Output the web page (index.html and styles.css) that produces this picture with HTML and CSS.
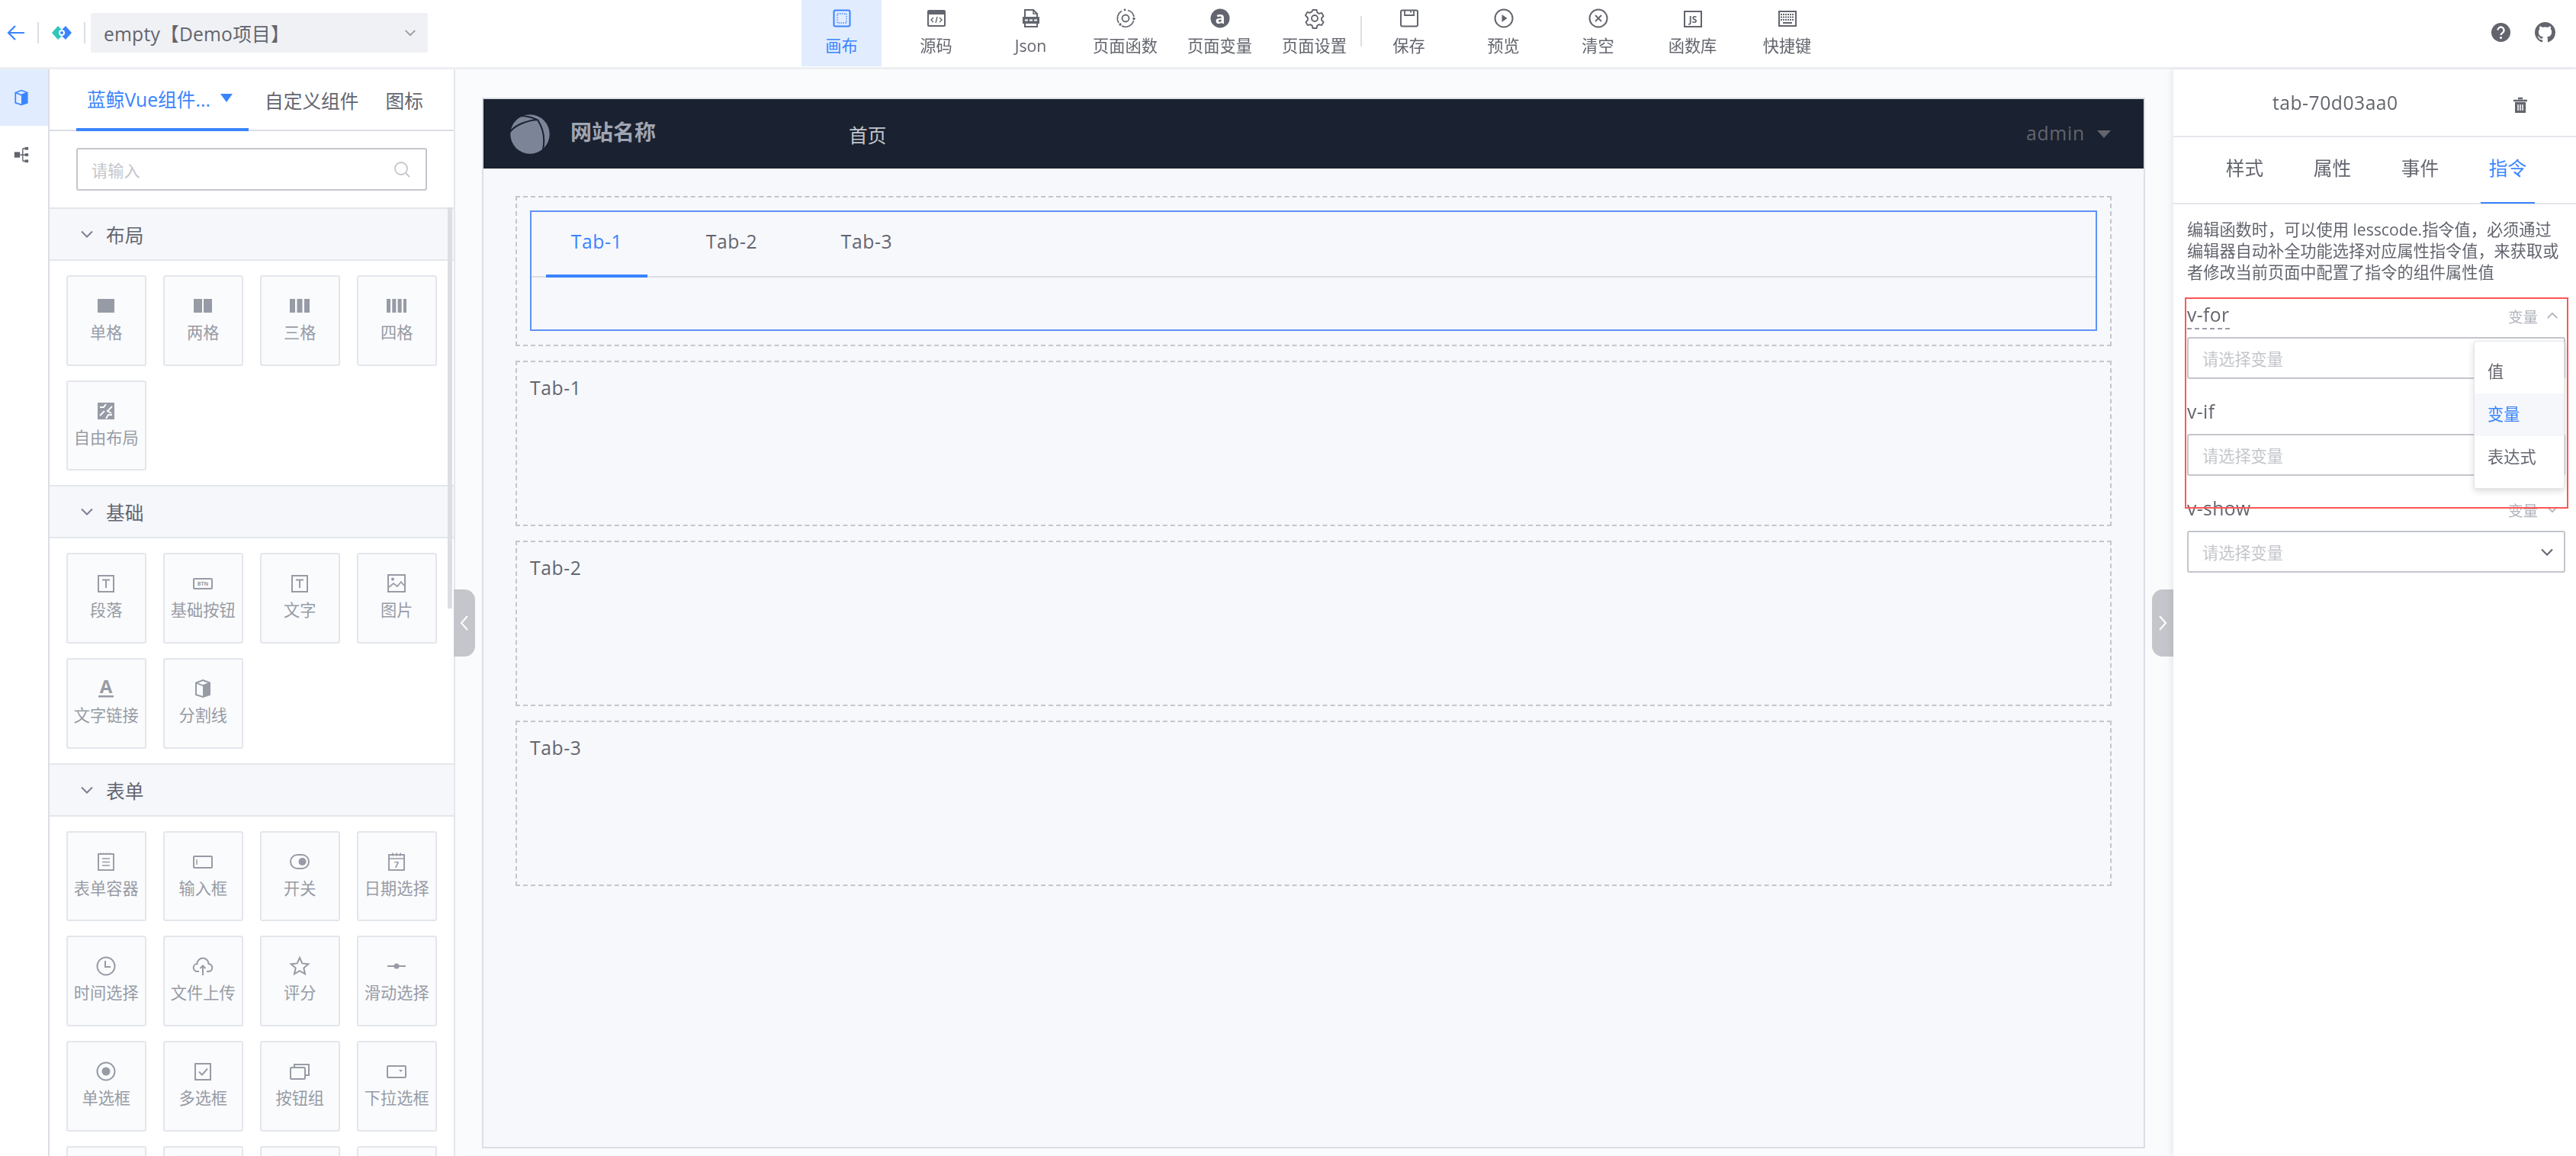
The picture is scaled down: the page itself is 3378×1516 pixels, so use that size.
FILE: index.html
```html
<!DOCTYPE html>
<html lang="zh">
<head>
<meta charset="utf-8">
<title>empty【Demo项目】</title>
<link rel="stylesheet" href="styles.css">
</head>
<body>
<svg class="defs" width="0" height="0">
  <defs>
    <symbol id="t-canvas" viewBox="0 0 28 28"><rect x="3.500" y="3.500" width="21" height="21" rx="2" fill="none" stroke="currentColor" stroke-width="2"/><rect x="8" y="8" width="12" height="12" fill="none" stroke="currentColor" stroke-width="1.300" stroke-dasharray="1.500 1.500"/></symbol>
    <symbol id="t-code" viewBox="0 0 28 28"><rect x="3" y="4" width="22" height="20" rx="1" fill="none" stroke="currentColor" stroke-width="2"/><rect x="3" y="4" width="22" height="5" fill="currentColor"/><path d="M10 13l-3 3 3 3M18 13l3 3-3 3M15 12l-2 8" fill="none" stroke="currentColor" stroke-width="1.400"/></symbol>
    <symbol id="t-json" viewBox="0 0 28 28"><path d="M6 25V3h11l5 5v17z" fill="none" stroke="currentColor" stroke-width="2"/><path d="M17 3v5h5" fill="none" stroke="currentColor" stroke-width="1.500"/><rect x="3" y="12" width="22" height="9" fill="currentColor"/><path d="M6 16.500h4M12 16.500h4M18 16.500h4" stroke="#fff" stroke-width="1.800"/></symbol>
    <symbol id="t-func" viewBox="0 0 28 28"><path d="M9 4.500A11 11 0 0 0 5 20M17 3.500A11 11 0 0 1 25 12M24.500 17A11 11 0 0 1 9 24" fill="none" stroke="currentColor" stroke-width="1.600"/><circle cx="14" cy="14" r="4.500" fill="none" stroke="currentColor" stroke-width="1.800"/><circle cx="25" cy="14.500" r="1.700" fill="currentColor"/><circle cx="7" cy="22" r="1.700" fill="currentColor"/><circle cx="13" cy="3" r="1.400" fill="currentColor"/></symbol>
    <symbol id="t-var" viewBox="0 0 28 28"><circle cx="14" cy="14" r="12.500" fill="currentColor"/><text x="14" y="20.500" text-anchor="middle" class="svg-a" fill="#fff">a</text></symbol>
    <symbol id="t-gear" viewBox="0 0 28 28"><path d="M11.500 3h5l.8 3.400 2.600 1.500 3.300-1 2.400 4.200-2.500 2.400v3l2.500 2.400-2.400 4.200-3.300-1-2.600 1.500-.8 3.400h-5l-.8-3.400-2.600-1.500-3.300 1-2.400-4.200 2.500-2.400v-3L1.900 10.100l2.400-4.200 3.300 1 2.600-1.500z" fill="none" stroke="currentColor" stroke-width="1.900" stroke-linejoin="round"/><circle cx="14" cy="14" r="4" fill="none" stroke="currentColor" stroke-width="1.900"/></symbol>
    <symbol id="t-save" viewBox="0 0 28 28"><rect x="3" y="3.500" width="22" height="21" rx="2" fill="none" stroke="currentColor" stroke-width="2"/><path d="M8 4v6h12V4M15 5.500h2" fill="none" stroke="currentColor" stroke-width="1.800"/></symbol>
    <symbol id="t-play" viewBox="0 0 28 28"><circle cx="14" cy="14" r="11.500" fill="none" stroke="currentColor" stroke-width="2"/><path d="M11.500 9l7 5-7 5z" fill="currentColor"/></symbol>
    <symbol id="t-clear" viewBox="0 0 28 28"><circle cx="14" cy="14" r="11.500" fill="none" stroke="currentColor" stroke-width="2"/><path d="M10 10l8 8M18 10l-8 8" stroke="currentColor" stroke-width="1.800"/></symbol>
    <symbol id="t-js" viewBox="0 0 28 28"><rect x="3" y="5" width="22" height="20" fill="none" stroke="currentColor" stroke-width="2"/><text x="14" y="19.500" text-anchor="middle" class="svg-js" fill="currentColor">JS</text></symbol>
    <symbol id="t-key" viewBox="0 0 28 28"><rect x="3" y="5" width="22" height="19" fill="none" stroke="currentColor" stroke-width="2"/><path d="M5 9h18M5 12.500h18M5 16h18" stroke="currentColor" stroke-width="1.800" stroke-dasharray="2 1"/><path d="M8 20h12" stroke="currentColor" stroke-width="2"/></symbol>
    <symbol id="c-g1" viewBox="0 0 28 28"><rect x="3" y="5" width="22" height="18" fill="currentColor"/></symbol>
    <symbol id="c-g2" viewBox="0 0 28 28"><rect x="2" y="5" width="11" height="18" fill="currentColor"/><rect x="15" y="5" width="11" height="18" fill="currentColor"/></symbol>
    <symbol id="c-g3" viewBox="0 0 28 28"><path d="M1 5h7v18H1zM10.500 5h7v18h-7zM20 5h7v18h-7z" fill="currentColor"/></symbol>
    <symbol id="c-g4" viewBox="0 0 28 28"><path d="M1 5h5v18H1zM8.300 5h5v18h-5zM15.600 5h5v18h-5zM23 5h4v18h-4z" fill="currentColor"/></symbol>
    <symbol id="c-free" viewBox="0 0 28 28"><rect x="3" y="3" width="22" height="22" fill="currentColor"/><path d="M6 9h5l3-4M22 8l-6 6 5 3M6 20l6-6M14 24l3-5h5" fill="none" stroke="#fafbfd" stroke-width="2"/></symbol>
    <symbol id="c-para" viewBox="0 0 28 28"><rect x="4" y="4" width="20" height="21" fill="none" stroke="currentColor" stroke-width="2"/><path d="M9 9.500h10M14 9.500V20" stroke="currentColor" stroke-width="2"/></symbol>
    <symbol id="c-btn" viewBox="0 0 28 28"><rect x="2" y="8" width="24" height="13" rx="1" fill="none" stroke="currentColor" stroke-width="2"/><text x="14" y="17" text-anchor="middle" class="svg-btn" fill="currentColor">BTN</text></symbol>
    <symbol id="c-img" viewBox="0 0 28 28"><rect x="3" y="3" width="22" height="22" fill="none" stroke="currentColor" stroke-width="2"/><circle cx="9" cy="8.500" r="2" fill="currentColor"/><path d="M4 19l6-5 5 4 5-6 4 5" fill="none" stroke="currentColor" stroke-width="1.700"/></symbol>
    <symbol id="c-link" viewBox="0 0 28 28"><text x="14" y="20" text-anchor="middle" class="svg-link" fill="currentColor">A</text><rect x="4" y="23" width="20" height="2.500" fill="currentColor"/></symbol>
    <symbol id="c-cube" viewBox="0 0 28 28"><path d="M14 3l9 3.500v15.500l-9 3-9-3V6.500z" fill="none" stroke="currentColor" stroke-width="2"/><path d="M5 6.500l9 3.500 9-3.500" fill="none" stroke="currentColor" stroke-width="1.800"/><path d="M14 10l9-3.500v15.500l-9 3z" fill="currentColor"/></symbol>
    <symbol id="c-form" viewBox="0 0 28 28"><rect x="4" y="4" width="20" height="21" fill="none" stroke="currentColor" stroke-width="1.900"/><path d="M9 10h10M9 14.500h10M9 19h10M7 2.500v2M11 2.500v2M15 2.500v2M19 2.500v2" stroke="currentColor" stroke-width="1.700"/></symbol>
    <symbol id="c-input" viewBox="0 0 28 28"><rect x="2" y="7" width="24" height="15" rx="1" fill="none" stroke="currentColor" stroke-width="2"/><path d="M6 11v7" stroke="currentColor" stroke-width="1.500"/></symbol>
    <symbol id="c-switch" viewBox="0 0 28 28"><rect x="2" y="5" width="24" height="18" rx="9" fill="none" stroke="currentColor" stroke-width="2"/><circle cx="17.500" cy="14" r="5" fill="currentColor"/></symbol>
    <symbol id="c-date" viewBox="0 0 28 28"><rect x="4" y="5" width="20" height="20" fill="none" stroke="currentColor" stroke-width="1.900"/><path d="M4 10h20M9 2.500v4M14 2.500v4M19 2.500v4" stroke="currentColor" stroke-width="1.700"/><text x="14" y="22" text-anchor="middle" class="svg-seven" fill="currentColor">7</text></symbol>
    <symbol id="c-time" viewBox="0 0 28 28"><circle cx="14" cy="14" r="11.500" fill="none" stroke="currentColor" stroke-width="2"/><path d="M13 7v8h7" fill="none" stroke="currentColor" stroke-width="2"/></symbol>
    <symbol id="c-upload" viewBox="0 0 28 28"><path d="M9 21H7a5 5 0 0 1-.5-10 7.500 7.500 0 0 1 15 0A5 5 0 0 1 21 21h-2" fill="none" stroke="currentColor" stroke-width="2"/><path d="M14 26V14M10.500 17l3.500-3.500 3.500 3.500" fill="none" stroke="currentColor" stroke-width="2"/></symbol>
    <symbol id="c-star" viewBox="0 0 28 28"><path d="M14 3l3.300 7.400 8 .8-6 5.300 1.800 7.800-7.100-4.100-7.100 4.100 1.800-7.800-6-5.300 8-.8z" fill="none" stroke="currentColor" stroke-width="2"/></symbol>
    <symbol id="c-slider" viewBox="0 0 28 28"><path d="M2 14h24" stroke="currentColor" stroke-width="2"/><circle cx="14" cy="14" r="3.500" fill="currentColor"/></symbol>
    <symbol id="c-radio" viewBox="0 0 28 28"><circle cx="14" cy="14" r="11.500" fill="none" stroke="currentColor" stroke-width="2"/><circle cx="14" cy="14" r="5.500" fill="currentColor"/></symbol>
    <symbol id="c-check" viewBox="0 0 28 28"><rect x="4" y="4" width="20" height="21" fill="none" stroke="currentColor" stroke-width="2"/><path d="M9 14.500l4 4 7-8" fill="none" stroke="currentColor" stroke-width="1.900"/></symbol>
    <symbol id="c-group" viewBox="0 0 28 28"><rect x="2" y="9" width="19" height="15" rx="1" fill="none" stroke="currentColor" stroke-width="2"/><path d="M7 9V5h19v14h-5" fill="none" stroke="currentColor" stroke-width="2"/></symbol>
    <symbol id="c-select" viewBox="0 0 28 28"><rect x="2" y="7" width="24" height="15" rx="1" fill="none" stroke="currentColor" stroke-width="2"/><path d="M17 12h5l-2.500 3z" fill="currentColor"/></symbol>
    <symbol id="i-down" viewBox="0 0 20 20"><path d="M3 6.500l7 7 7-7" fill="none" stroke="currentColor" stroke-width="2"/></symbol>
    <symbol id="i-up" viewBox="0 0 20 20"><path d="M3 13.500l7-7 7 7" fill="none" stroke="currentColor" stroke-width="2"/></symbol>
  </defs>
</svg>

<div class="app">
  <header class="topbar">
    <svg class="back" width="24" height="24" viewBox="0 0 24 24"><path d="M23 12H2M11 3l-9 9 9 9" fill="none" stroke="currentColor" stroke-width="2.200"/></svg>
    <i class="vline"></i>
    <svg class="brand" width="26" height="18" viewBox="0 0 26 18"><path d="M8 0l5 5-4 4 4 4-5 5-8-9z" fill="#2fc6c0"/><path d="M18 0l8 9-8 9-5-5 4-4-4-4z" fill="#3a84ff"/><circle cx="13" cy="9" r="4" fill="#fff"/><circle cx="13" cy="9" r="2" fill="#3a84ff"/></svg>
    <i class="vline"></i>
    <div class="project">
      <span>empty【Demo项目】</span>
      <svg class="chev" width="18" height="18"><use href="#i-down"/></svg>
    </div>
    <nav class="tools">
      <a class="tool active"><svg width="28" height="28"><use href="#t-canvas"/></svg><span>画布</span></a>
      <a class="tool"><svg width="28" height="28"><use href="#t-code"/></svg><span>源码</span></a>
      <a class="tool"><svg width="28" height="28"><use href="#t-json"/></svg><span>Json</span></a>
      <a class="tool"><svg width="28" height="28"><use href="#t-func"/></svg><span>页面函数</span></a>
      <a class="tool"><svg width="28" height="28"><use href="#t-var"/></svg><span>页面变量</span></a>
      <a class="tool sep"><svg width="28" height="28"><use href="#t-gear"/></svg><span>页面设置</span></a>
      <a class="tool"><svg width="28" height="28"><use href="#t-save"/></svg><span>保存</span></a>
      <a class="tool"><svg width="28" height="28"><use href="#t-play"/></svg><span>预览</span></a>
      <a class="tool"><svg width="28" height="28"><use href="#t-clear"/></svg><span>清空</span></a>
      <a class="tool"><svg width="28" height="28"><use href="#t-js"/></svg><span>函数库</span></a>
      <a class="tool"><svg width="28" height="28"><use href="#t-key"/></svg><span>快捷键</span></a>
    </nav>
    <div class="top-right">
      <svg width="27" height="27" viewBox="0 0 28 28"><circle cx="14" cy="14" r="13" fill="#63656e"/><path d="M9.800 11a4.200 4.200 0 1 1 6.600 3.400c-1.500 1-2.400 1.700-2.400 3.300" fill="none" stroke="#fff" stroke-width="2.400"/><circle cx="14" cy="21.300" r="1.600" fill="#fff"/></svg>
      <svg width="27" height="27" viewBox="0 0 16 16"><path fill="#63656e" d="M8 0C3.580 0 0 3.580 0 8c0 3.540 2.290 6.530 5.470 7.590.4.070.55-.17.55-.38 0-.19-.01-.82-.01-1.490-2.010.37-2.530-.49-2.690-.94-.09-.23-.48-.94-.82-1.130-.28-.15-.68-.52-.01-.53.63-.01 1.080.58 1.230.82.72 1.210 1.870.87 2.330.66.07-.52.28-.87.51-1.070-1.780-.2-3.640-.89-3.640-3.950 0-.87.31-1.590.82-2.150-.08-.2-.36-1.020.08-2.120 0 0 .67-.21 2.200.82.640-.18 1.320-.27 2-.27s1.360.09 2 .27c1.530-1.040 2.200-.82 2.200-.82.44 1.100.16 1.920.08 2.120.51.560.82 1.270.82 2.150 0 3.070-1.870 3.750-3.650 3.950.29.250.54.730.54 1.480 0 1.070-.01 1.930-.01 2.200 0 .21.150.46.550.38A8.010 8.010 0 0 0 16 8c0-4.420-3.580-8-8-8z"/></svg>
    </div>
  </header>

  <main class="body">
    <aside class="rail">
      <div class="rail-item on"><svg width="24" height="24"><use href="#c-cube"/></svg></div>
      <div class="rail-item"><svg width="22" height="24" viewBox="0 0 24 26"><rect x="2" y="9" width="8" height="8" fill="currentColor"/><path d="M10 13h9M14 4h5M14 22h5M14 4v18" fill="none" stroke="currentColor" stroke-width="1.500"/><rect x="17" y="2" width="5" height="4" fill="currentColor"/><rect x="17" y="11" width="5" height="4" fill="currentColor"/><rect x="17" y="20" width="5" height="4" fill="currentColor"/></svg></div>
    </aside>

    <aside class="palette">
      <div class="pal-tabs">
        <div class="pal-tab on"><span>蓝鲸Vue组件...</span><i class="tri"></i></div>
        <div class="pal-tab">自定义组件</div>
        <div class="pal-tab">图标</div>
      </div>
      <div class="pal-search">
        <div class="search">
          <span>请输入</span>
          <svg width="24" height="24" viewBox="0 0 24 24"><circle cx="11" cy="11" r="8" fill="none" stroke="currentColor" stroke-width="1.800"/><path d="M17 17l5 5" stroke="currentColor" stroke-width="1.800"/></svg>
        </div>
      </div>
      <div class="pal-list">
        <section>
          <h3 class="group"><svg width="20" height="20"><use href="#i-down"/></svg>布局</h3>
          <div class="grid">
            <div class="card"><svg width="28" height="28"><use href="#c-g1"/></svg><span>单格</span></div>
            <div class="card"><svg width="28" height="28"><use href="#c-g2"/></svg><span>两格</span></div>
            <div class="card"><svg width="28" height="28"><use href="#c-g3"/></svg><span>三格</span></div>
            <div class="card"><svg width="28" height="28"><use href="#c-g4"/></svg><span>四格</span></div>
            <div class="card"><svg width="28" height="28"><use href="#c-free"/></svg><span>自由布局</span></div>
          </div>
        </section>
        <section>
          <h3 class="group"><svg width="20" height="20"><use href="#i-down"/></svg>基础</h3>
          <div class="grid">
            <div class="card"><svg width="28" height="28"><use href="#c-para"/></svg><span>段落</span></div>
            <div class="card"><svg width="28" height="28"><use href="#c-btn"/></svg><span>基础按钮</span></div>
            <div class="card"><svg width="28" height="28"><use href="#c-para"/></svg><span>文字</span></div>
            <div class="card"><svg width="28" height="28"><use href="#c-img"/></svg><span>图片</span></div>
            <div class="card"><svg width="28" height="28"><use href="#c-link"/></svg><span>文字链接</span></div>
            <div class="card"><svg width="28" height="28"><use href="#c-cube"/></svg><span>分割线</span></div>
          </div>
        </section>
        <section>
          <h3 class="group"><svg width="20" height="20"><use href="#i-down"/></svg>表单</h3>
          <div class="grid">
            <div class="card"><svg width="28" height="28"><use href="#c-form"/></svg><span>表单容器</span></div>
            <div class="card"><svg width="28" height="28"><use href="#c-input"/></svg><span>输入框</span></div>
            <div class="card"><svg width="28" height="28"><use href="#c-switch"/></svg><span>开关</span></div>
            <div class="card"><svg width="28" height="28"><use href="#c-date"/></svg><span>日期选择</span></div>
            <div class="card"><svg width="28" height="28"><use href="#c-time"/></svg><span>时间选择</span></div>
            <div class="card"><svg width="28" height="28"><use href="#c-upload"/></svg><span>文件上传</span></div>
            <div class="card"><svg width="28" height="28"><use href="#c-star"/></svg><span>评分</span></div>
            <div class="card"><svg width="28" height="28"><use href="#c-slider"/></svg><span>滑动选择</span></div>
            <div class="card"><svg width="28" height="28"><use href="#c-radio"/></svg><span>单选框</span></div>
            <div class="card"><svg width="28" height="28"><use href="#c-check"/></svg><span>多选框</span></div>
            <div class="card"><svg width="28" height="28"><use href="#c-group"/></svg><span>按钮组</span></div>
            <div class="card"><svg width="28" height="28"><use href="#c-select"/></svg><span>下拉选框</span></div>
            <div class="card"></div>
            <div class="card"></div>
            <div class="card"></div>
            <div class="card"></div>
          </div>
        </section>
      </div>
      <i class="scrollthumb"></i>
    </aside>

    <section class="stage">
      <div class="handle handle-l"><svg width="12" height="24" viewBox="0 0 12 24"><path d="M10 3L2 12l8 9" fill="none" stroke="currentColor" stroke-width="2"/></svg></div>
      <div class="handle handle-r"><svg width="12" height="24" viewBox="0 0 12 24"><path d="M2 3l8 9-8 9" fill="none" stroke="currentColor" stroke-width="2"/></svg></div>
      <div class="canvas">
        <div class="site-nav">
          <svg class="site-logo" width="52" height="52" viewBox="0 0 52 52"><circle cx="26" cy="26" r="25.700" fill="#7c8497"/><path d="M0 23C6 14 22 8 36 7M36 7c7 11 10 25 7 39M13 2c9 0 17 2 24 6" fill="none" stroke="#1a2130" stroke-width="2"/></svg>
          <strong class="site-name">网站名称</strong>
          <span class="site-link">首页</span>
          <span class="site-user">admin</span>
          <i class="site-tri"></i>
        </div>
        <div class="canvas-body">
          <div class="slot slot-tabs">
            <div class="tabs-comp">
              <div class="tabs-head">
                <span class="tab on">Tab-1</span>
                <span class="tab">Tab-2</span>
                <span class="tab">Tab-3</span>
              </div>
            </div>
          </div>
          <div class="slot">Tab-1</div>
          <div class="slot">Tab-2</div>
          <div class="slot">Tab-3</div>
        </div>
      </div>
    </section>

    <aside class="props">
      <div class="props-title">
        <span>tab-70d03aa0</span>
        <svg class="trash" width="22" height="24" viewBox="0 0 22 24"><path d="M2 6h18M8 3h6" stroke="currentColor" stroke-width="2.400"/><path d="M4 8h14v14H4z" fill="currentColor"/><path d="M8 11v8M11 11v8M14 11v8" stroke="#fff" stroke-width="1.500"/></svg>
      </div>
      <div class="props-tabs">
        <div class="ptab"><span>样式</span></div>
        <div class="ptab"><span>属性</span></div>
        <div class="ptab"><span>事件</span></div>
        <div class="ptab on"><span>指令</span></div>
      </div>
      <div class="props-body">
        <p class="tip">编辑函数时，可以使用 lesscode.指令值，必须通过编辑器自动补全功能选择对应属性指令值，来获取或者修改当前页面中配置了指令的组件属性值</p>
        <div class="field">
          <div class="field-head"><label class="dash">v-for</label><span class="kind">变量<svg width="18" height="18"><use href="#i-up"/></svg></span></div>
          <div class="picker"><span>请选择变量</span></div>
        </div>
        <div class="field">
          <div class="field-head"><label>v-if</label></div>
          <div class="picker"><span>请选择变量</span></div>
        </div>
        <div class="field">
          <div class="field-head"><label>v-show</label><span class="kind">变量<svg width="18" height="18"><use href="#i-down"/></svg></span></div>
          <div class="picker"><span>请选择变量</span><svg class="pick-chev" width="20" height="20"><use href="#i-down"/></svg></div>
        </div>
        <ul class="menu">
          <li>值</li>
          <li class="on">变量</li>
          <li>表达式</li>
        </ul>
        <div class="annot"></div>
      </div>
    </aside>
  </main>
</div>
</body>
</html>
```

FILE: styles.css
```css
* { box-sizing: border-box; }
html, body { margin: 0; padding: 0; height: 100%; }
body {
  width: 3378px;
  height: 1516px;
  overflow: hidden;
  background: #fff;
  color: #63656e;
  font-family: "Open Sans", "Noto Sans CJK SC", sans-serif;
  font-size: 21.2px;
}
.defs { position: absolute; }
.svg-a { font: 700 21px "Open Sans", sans-serif; }
.svg-js { font: 700 12px "Open Sans", sans-serif; }
.svg-btn { font: 700 7px "Open Sans", sans-serif; }
.svg-link { font: 700 24px "Open Sans", sans-serif; }
.svg-seven { font: 700 11px "Open Sans", sans-serif; }

.app {
  display: flex;
  flex-direction: column;
  height: 1516px;
  filter: blur(0.5px);
}

/* top bar */
.topbar {
  flex: none;
  display: flex;
  align-items: center;
  height: 91px;
  padding: 0 0 3px 9px;
  background: #fff;
  border-bottom: 3px solid #eceef2;
}
.back { color: #3a84ff; flex: none; }
.vline { flex: none; width: 2px; height: 28px; margin: 0 17px 0 16px; background: #dcdee5; }
.brand { flex: none; }
.vline + .project { margin-left: -10px; }
.project {
  flex: none;
  display: flex;
  align-items: center;
  justify-content: space-between;
  width: 442px;
  height: 52px;
  padding: 0 14px 0 17px;
  border-radius: 3px;
  background: #f0f1f5;
  font-size: 24.7px;
  letter-spacing: 0.2px;
}
.chev { color: #979ba5; }
.tools {
  flex: none;
  display: flex;
  gap: 19px;
  margin-left: 490px;
  height: 88px;
}
.tool {
  position: relative;
  flex: none;
  width: 105px;
  height: 88px;
  display: flex;
  flex-direction: column;
  align-items: center;
  padding-top: 11px;
  color: #63656e;
  white-space: nowrap;
}
.tool span { margin-top: 7px; font-size: 21.2px; line-height: 30px; }
.tool.active { background: #e1ecff; color: #3a84ff; }
.tool.sep::after {
  content: "";
  position: absolute;
  right: -10px;
  top: 22px;
  width: 2px;
  height: 40px;
  background: #dcdee5;
}
.top-right {
  margin-left: auto;
  display: flex;
  gap: 31px;
  padding-right: 27px;
}

/* main */
.body { flex: 1; display: flex; min-height: 0; }

.rail {
  flex: none;
  width: 65px;
  border-right: 2px solid #dcdee5;
}
.rail-item {
  height: 74px;
  display: flex;
  align-items: center;
  justify-content: center;
  padding-right: 8px;
  color: #63656e;
}
.rail-item.on { background: #e1ecff; color: #3a84ff; }
.rail-item + .rail-item { height: 76px; }

/* palette */
.palette {
  position: relative;
  flex: none;
  width: 532px;
  display: flex;
  flex-direction: column;
  overflow: hidden;
  background: #fff;
  border-right: 2px solid #e4e6ec;
}
.pal-tabs {
  flex: none;
  display: flex;
  height: 81px;
  padding-left: 35px;
  border-bottom: 2px solid #dcdee5;
  font-size: 24.7px;
}
.pal-tab {
  display: flex;
  align-items: center;
  height: 81px;
  padding-bottom: 2px;
  margin-right: 35px;
  white-space: nowrap;
}
.pal-tab.on {
  width: 226px;
  margin-right: 21px;
  padding-left: 14px;
  color: #3a84ff;
  border-bottom: 4px solid #3a84ff;
}
.tri {
  margin-left: 13px;
  border: 8px solid transparent;
  border-top: 11px solid #3a84ff;
  border-bottom: 0;
}
.pal-search { flex: none; padding: 22px 0 22px 35px; }
.search {
  width: 460px;
  height: 56px;
  display: flex;
  align-items: center;
  justify-content: space-between;
  padding: 0 19px 0 18px;
  border: 2px solid #c4c6cc;
  border-radius: 3px;
  color: #c4c6cc;
}
.pal-list { flex: 1; min-height: 0; overflow: hidden; }
.group {
  display: flex;
  align-items: center;
  gap: 15px;
  height: 70px;
  margin: 0;
  padding-left: 39px;
  background: #f5f7fb;
  border-top: 2px solid #e4e6ec;
  border-bottom: 2px solid #e4e6ec;
  font-size: 24.7px;
  font-weight: 400;
}
.group svg { color: #7c8090; }
.grid {
  display: grid;
  grid-template-columns: repeat(4, 104.5px);
  grid-auto-rows: 118.67px;
  gap: 19px 22.5px;
  padding: 19px 0 19px 22px;
}
.card {
  display: flex;
  flex-direction: column;
  align-items: center;
  padding-top: 24px;
  background: #fafbfd;
  border: 2px solid #e4e6ec;
  border-radius: 3px;
  color: #979ba5;
  white-space: nowrap;
}
.card span { margin-top: 7px; line-height: 28px; }
.scrollthumb {
  position: absolute;
  right: 2px;
  top: 181px;
  width: 6px;
  height: 526px;
  background: #dcdee5;
}

/* stage */
.stage {
  position: relative;
  flex: 1;
  min-width: 0;
  padding: 37px 37px 10px 35px;
  background: #fafbfd;
}
.handle {
  position: absolute;
  top: 682px;
  width: 28px;
  height: 88px;
  display: flex;
  align-items: center;
  justify-content: center;
  background: #c4c6cc;
  color: #fff;
}
.handle-l { left: -2px; border-radius: 0 14px 14px 0; }
.handle-r { right: 0; border-radius: 14px 0 0 14px; }
.canvas {
  height: 100%;
  background: #f7f8fc;
  border: 2px solid #dcdee5;
}
.site-nav {
  display: flex;
  align-items: center;
  height: 91px;
  padding-left: 35px;
  background: #1a2130;
}
.site-logo { flex: none; }
.site-name {
  margin: -8px 0 0 27px;
  width: 365px;
  font-size: 28px;
  font-weight: 700;
  color: #a0a5b2;
}
.site-link { font-size: 24.7px; color: #c4c6cc; }
.site-user { margin: -2px 0 0 auto; font-size: 24.7px; letter-spacing: 0.8px; color: #63656e; }
.site-tri {
  margin: 0 43px 0 16px;
  border: 9px solid transparent;
  border-top: 10px solid #63656e;
  border-bottom: 0;
}
.canvas-body {
  display: flex;
  flex-direction: column;
  gap: 19px;
  padding: 36px 42px 0;
}
.slot {
  height: 217px;
  padding: 16px 17px;
  border: 2px dashed #c4c6cc;
  font-size: 24.7px;
  line-height: 36px;
  letter-spacing: 0.6px;
}
.slot-tabs { height: 197px; padding-top: 17px; }
.tabs-comp {
  height: 158px;
  border: 2px solid #5f92f5;
}
.tabs-head {
  display: flex;
  gap: 44px;
  height: 86px;
  padding-left: 19px;
  border-bottom: 2px solid #dcdee5;
}
.tab {
  width: 133px;
  height: 86px;
  text-align: center;
  line-height: 78px;
}
.tab.on { color: #3a84ff; border-bottom: 4px solid #3a84ff; }

/* properties */
.props {
  flex: none;
  width: 528px;
  display: flex;
  flex-direction: column;
  background: #fff;
  box-shadow: -4px 0 6px rgba(0, 0, 0, 0.06);
  z-index: 1;
}
.props-title {
  position: relative;
  flex: none;
  height: 89px;
  display: flex;
  align-items: center;
  padding: 0 0 0 130px;
  border-bottom: 2px solid #e4e6ec;
  font-size: 24.7px;
  letter-spacing: 0.5px;
}
.trash { position: absolute; right: 62px; top: 35px; color: #63656e; }
.props-tabs {
  flex: none;
  display: flex;
  justify-content: center;
  height: 88px;
  padding-left: 4px;
  border-bottom: 2px solid #e4e6ec;
  font-size: 24.7px;
}
.ptab { width: 115px; height: 86px; display: flex; justify-content: center; }
.ptab span { padding: 0 11px; line-height: 82px; height: 87px; }
.ptab.on span { color: #3a84ff; border-bottom: 2px solid #3a84ff; }
.props-body { position: relative; flex: 1; padding: 19px 0 0 18px; }
.tip { width: 490px; margin: 0 0 15px; line-height: 28px; }
.field { width: 496px; margin-bottom: 16px; }
.field-head {
  display: flex;
  align-items: center;
  justify-content: space-between;
  height: 56px;
}
.field-head label {
  font-size: 24.7px;
  line-height: 34px;
  letter-spacing: 0.4px;
  border-bottom: 2px dashed transparent;
}
.field-head label.dash { border-bottom-color: #979ba5; }
.kind {
  display: flex;
  align-items: center;
  gap: 10px;
  padding-right: 8px;
  font-size: 19.5px;
  color: #b0b3bb;
}
.picker {
  position: relative;
  height: 55px;
  display: flex;
  align-items: center;
  justify-content: space-between;
  padding: 0 12px 0 18px;
  border: 2px solid #c4c6cc;
  border-radius: 3px;
  color: #c4c6cc;
}
.pick-chev { color: #63656e; }
.menu {
  position: absolute;
  left: 394px;
  top: 179px;
  width: 119px;
  margin: 0;
  padding: 12px 0;
  list-style: none;
  background: #fff;
  border: 1px solid #e4e6ec;
  border-radius: 3px;
  box-shadow: 0 3px 9px rgba(0, 0, 0, 0.15);
}
.menu li { height: 56px; padding-left: 17px; line-height: 53px; }
.menu li.on { background: #f5f7fa; color: #3a84ff; }
.annot {
  position: absolute;
  left: 15px;
  top: 122px;
  width: 503px;
  height: 277px;
  border: 2px solid #ff5656;
  pointer-events: none;
}
```
